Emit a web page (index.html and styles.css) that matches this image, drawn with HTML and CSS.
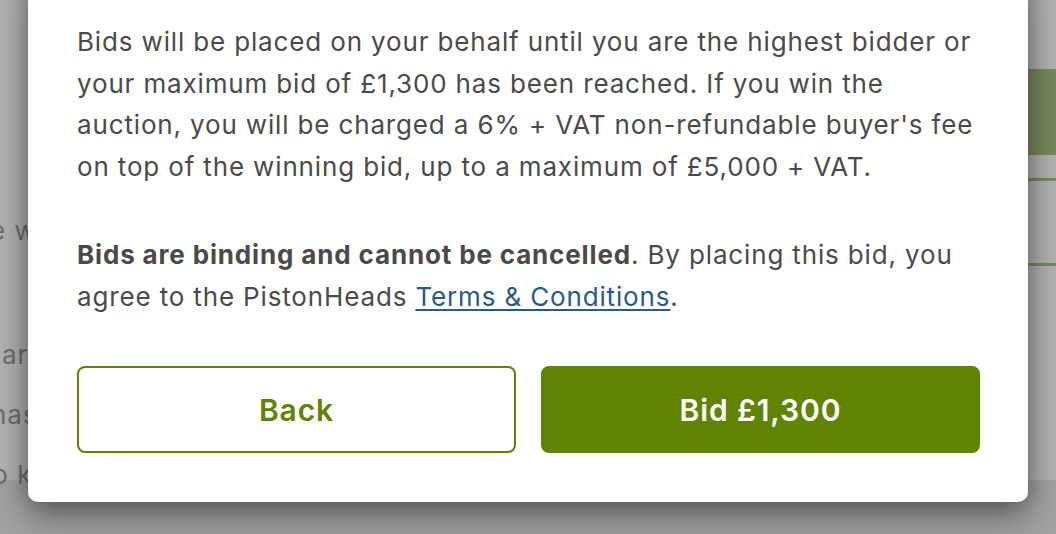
FILE: index.html
```html
<!DOCTYPE html>
<html lang="en">
<head>
<meta charset="utf-8">
<link rel="stylesheet" href="styles.css">
</head>
<body>
<div class="page">
  <div class="page-left">
    <p class="bg-line l1">e w</p>
    <p class="bg-line l2">ar</p>
    <p class="bg-line l3">has</p>
    <p class="bg-line l4">to key</p>
  </div>
  <div class="page-right">
    <div class="bg-banner"></div>
    <div class="bg-rule r1"></div>
    <div class="bg-rule r2"></div>
  </div>
</div>
<div class="overlay"></div>
<div class="modal">
  <p class="para">Bids will be placed on your behalf until you are the highest bidder or your maximum bid of £1,300 has been reached. If you win the auction, you will be charged a 6% + VAT non-refundable buyer's fee on top of the winning bid, up to a maximum of £5,000 + VAT.</p>
  <p class="para para-2"><strong>Bids are binding and cannot be cancelled</strong>. By placing this bid, you agree to the PistonHeads <a href="#" class="link">Terms &amp; Conditions</a>.</p>
  <div class="actions">
    <button class="btn btn-outline">Back</button>
    <button class="btn btn-solid">Bid £1,300</button>
  </div>
</div>
</body>
</html>
```

FILE: styles.css
```css
* { box-sizing: border-box; }
html, body { margin: 0; padding: 0; }
body {
  width: 1056px;
  height: 534px;
  overflow: hidden;
  position: relative;
  font-family: Inter, "Noto Sans", sans-serif;
  background: #ffffff;
}
.page {
  display: flex;
  justify-content: space-between;
  height: 534px;
  border-bottom: 54px solid #e8e8e8;
}
.page-left {
  width: 120px;
  padding-top: 211px;
}
.bg-line {
  margin: 0;
  font-size: 26px;
  letter-spacing: 1px;
  line-height: 40px;
  color: #9c9c9c;
  white-space: nowrap;
}
.bg-line.l1 { margin-left: -10px; margin-bottom: 84px; }
.bg-line.l2 { margin-left: 2px; margin-bottom: 20px; }
.bg-line.l3 { margin-left: -9px; margin-bottom: 20px; }
.bg-line.l4 { margin-left: -17px; }
.page-right {
  width: 60px;
  padding-top: 69px;
}
.bg-banner { height: 86px; background: #aec586; }
.bg-rule { height: 3px; background: #aec586; }
.bg-rule.r1 { margin-top: 23px; }
.bg-rule.r2 { margin-top: 82px; }
.overlay {
  position: absolute;
  inset: 0;
  background: rgba(0, 0, 0, 0.3);
}
.modal {
  position: absolute;
  left: 28px;
  top: -30px;
  width: 1000px;
  background: #ffffff;
  border-radius: 10px;
  padding: 51px 46px 49px 49px;
  box-shadow: 0 14px 34px rgba(0, 0, 0, 0.4), 0 0 24px rgba(0, 0, 0, 0.2);
}
.para {
  margin: 0;
  font-size: 26px;
  letter-spacing: 0.85px;
  line-height: 41.5px;
  color: #4a4a4a;
}
.para strong { font-weight: 700; }
.para-2 { margin-top: 47px; }
.link {
  color: #285a8a;
  text-decoration: underline;
  text-underline-offset: 3px;
  text-decoration-thickness: 2px;
}
.actions {
  display: flex;
  gap: 25px;
  margin-top: 49px;
  padding-right: 2px;
}
.btn {
  flex: 1;
  height: 87px;
  border-radius: 8px;
  font-family: Inter, "Noto Sans", sans-serif;
  font-size: 30px;
  letter-spacing: 0.9px;
  font-weight: 600;
  cursor: pointer;
}
.btn-outline {
  background: #ffffff;
  border: 2px solid #608302;
  color: #608302;
}
.btn-solid {
  background: #608302;
  border: 2px solid #608302;
  color: #ffffff;
}
```
